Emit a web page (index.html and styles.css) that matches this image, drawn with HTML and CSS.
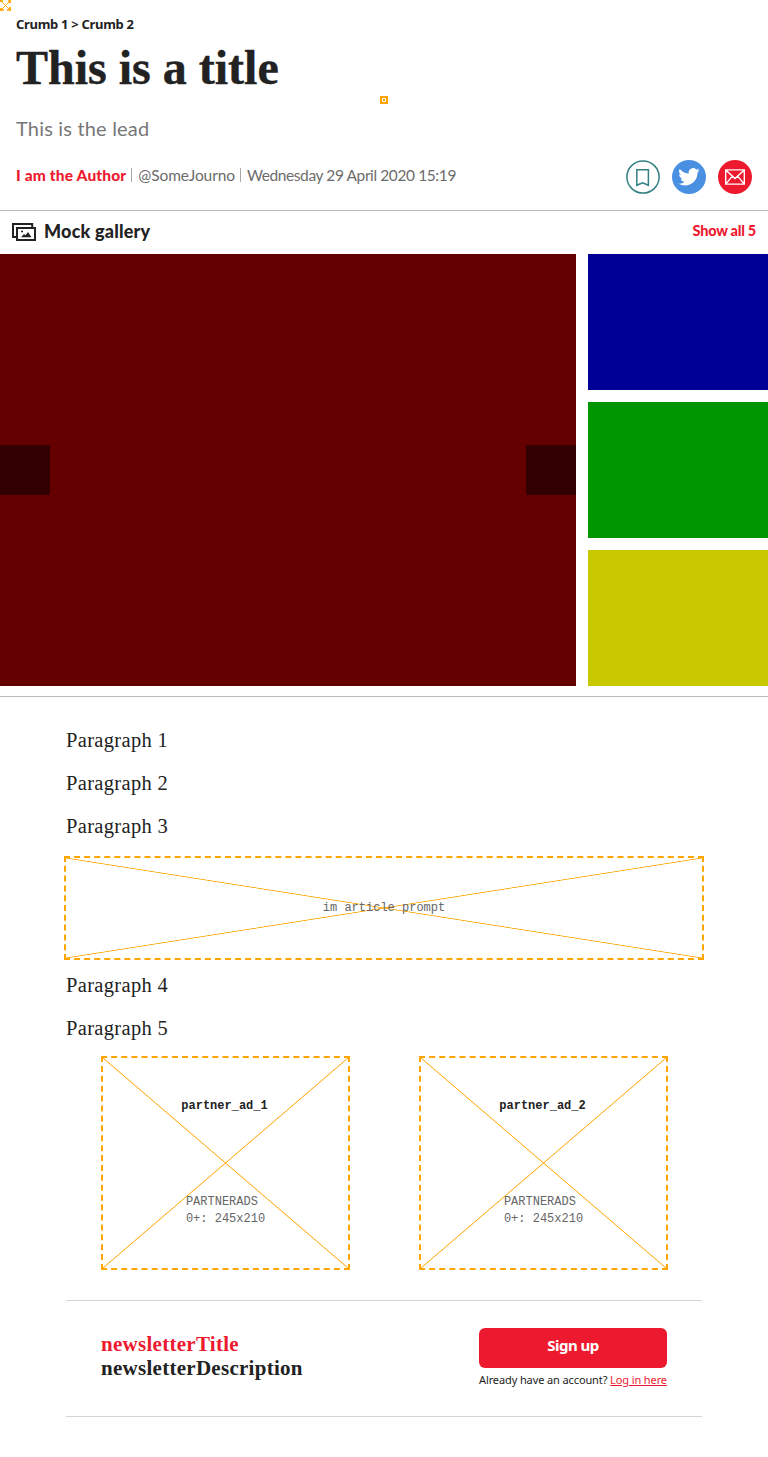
FILE: index.html
```html
<!DOCTYPE html>
<html lang="en">
<head>
<meta charset="utf-8">
<title>This is a title</title>
<link rel="stylesheet" href="styles.css">
</head>
<body>
<svg class="corner-marker" width="11" height="11" viewBox="0 0 11 11" fill="none" stroke="orange">
  <path d="M1 1l9 9M10 1l-9 9" stroke-width=".9"/>
  <path d="M0 1h3M8 1h3M0 10h4M7 10h4M1 0v2M10 0v3M1 8v3M10 7v4" stroke-width="1.7"/>
</svg>
<header class="header">
  <nav class="crumbs"><span>Crumb 1 &gt; Crumb 2</span></nav>
  <h1 class="title"><span>This is a title</span></h1>
  <div class="marker"></div>
  <p class="lead"><span>This is the lead</span></p>
  <div class="meta">
    <div class="byline"><b class="author">I am the Author</b><i class="bar"></i><span class="handle">@SomeJourno</span><i class="bar"></i><span class="date">Wednesday 29 April 2020 15:19</span></div>
    <div class="actions">
      <svg width="34" height="34" viewBox="0 0 34 34" fill="none" stroke="#338084" stroke-width="1.5"><circle cx="17" cy="17" r="16.1"/><path d="M10.8 9.8h11.6v15.5l-5.8-2.5-5.8 2.5z"/></svg>
      <svg width="34" height="34" viewBox="0 0 34 34"><circle cx="17" cy="17" r="17" fill="#4a90e2"/><path transform="translate(6.3 6.2) scale(.89)" fill="#fff" d="M23.95 4.57a10 10 0 0 1-2.82.77 4.96 4.96 0 0 0 2.16-2.72c-.95.55-2 .95-3.13 1.18a4.92 4.92 0 0 0-8.38 4.48C7.69 8.09 4.07 6.13 1.64 3.16a4.92 4.92 0 0 0 1.52 6.57 4.9 4.9 0 0 1-2.23-.61v.06a4.92 4.92 0 0 0 3.95 4.83 5 5 0 0 1-2.21.08 4.94 4.94 0 0 0 4.6 3.42A9.87 9.87 0 0 1 0 19.54a14 14 0 0 0 7.55 2.21c9.05 0 14-7.5 14-13.98 0-.21 0-.42-.02-.63a9.94 9.94 0 0 0 2.42-2.57z"/></svg>
      <svg width="34" height="34" viewBox="0 0 34 34" fill="none" stroke="#fff" stroke-width="1.4"><circle cx="17" cy="17" r="17" fill="#ed1a2f" stroke="none"/><path d="M7.7 9.9h18.6v14.2H7.7zM7.7 9.9L17 18.6l9.3-8.7M7.7 24.1l6.6-8M26.3 24.1l-6.6-8"/></svg>
    </div>
  </div>
</header>
<section class="gallery">
  <div class="gallery-head">
    <svg class="gallery-icon" width="24" height="18" viewBox="0 0 24 18" fill="none" stroke="#222" stroke-width="2"><path d="M20.2 4V1H1v13h4M5 5h18v12H5z"/><path d="M9 14.2l3-3.2 1.5 1.2L16 9l3.5 5.2z" fill="#222" stroke="none"/><path d="M9 8.5h2" stroke-width="1.6"/></svg>
    <h2 class="gallery-title"><span>Mock gallery</span></h2>
    <a class="show-all">Show all 5</a>
  </div>
  <div class="gallery-body">
    <div class="slide"><div class="arrow"></div><div class="arrow"></div></div>
    <div class="thumbs"><div class="thumb blue"></div><div class="thumb green"></div><div class="thumb yellow"></div></div>
  </div>
</section>
<main class="article">
  <p class="para"><span>Paragraph 1</span></p>
  <p class="para"><span>Paragraph 2</span></p>
  <p class="para"><span>Paragraph 3</span></p>
  <div class="box prompt"><span>im article prompt</span></div>
  <p class="para"><span>Paragraph 4</span></p>
  <p class="para last"><span>Paragraph 5</span></p>
  <div class="ads">
    <div class="box ad"><b>partner_ad_1</b><div class="sizes">PARTNERADS<br>0+: 245x210</div></div>
    <div class="box ad"><b>partner_ad_2</b><div class="sizes">PARTNERADS<br>0+: 245x210</div></div>
  </div>
  <section class="newsletter">
    <div class="news-text"><div class="news-title"><span>newsletterTitle</span></div><div class="news-desc"><span>newsletterDescription</span></div></div>
    <div class="news-action">
      <button class="signup"><span>Sign up</span></button>
      <p class="login">Already have an account? <a>Log in here</a></p>
    </div>
  </section>
</main>
</body>
</html>
```

FILE: styles.css
```css
* { box-sizing: border-box; }
body { margin: 0; background: #fff; color: #222; font-family: Lato, sans-serif; min-height: 1457px; }
h1, h2, p { margin: 0; }
svg { display: block; flex: none; }
.corner-marker { position: absolute; left: 0; top: 0; }
.header { padding: 15px 16px 16px; border-bottom: 1px solid #bbb; height: 211px; }
.crumbs { font: 700 13px/18px "Noto Sans", sans-serif; letter-spacing: -.3px; }
.title { margin-top: 8px; height: 55px; font: 700 48px/53px "Liberation Serif", serif; white-space: nowrap; -webkit-text-stroke: .4px #222; }
.marker { width: 8px; height: 8px; margin: 0 auto; background: radial-gradient(circle, orange 0 .8px, #fff 1px 2px, orange 2.3px); }
.lead { margin-top: 12px; font: 400 20px/24px Lato, sans-serif; letter-spacing: .18px; color: #777; }
.meta { margin-top: 20px; display: flex; justify-content: space-between; height: 34px; }
.byline { display: flex; align-items: center; height: 30px; font: 400 15.5px/20px Lato, sans-serif; color: #6c6c6c; white-space: nowrap; }
.author { font: 900 15.5px/20px Lato, sans-serif; letter-spacing: .15px; color: #ed1a2f; }
.handle { letter-spacing: -.1px; }
.date { letter-spacing: -.4px; }
.bar { width: 1px; height: 14px; margin: 0 6px 0 5px; background: #aaa; }
.actions { display: flex; gap: 12px; }
.gallery { border-bottom: 1px solid #bbb; padding-bottom: 10px; }
.gallery-head { height: 43px; padding: 0 12px 2px; display: flex; align-items: center; }
.gallery-title { margin: 0 0 2px 8px; font: 900 18px/24px Lato, sans-serif; letter-spacing: .2px; }
.show-all { margin: 0 0 2px auto; font: 900 14.5px/20px Lato, sans-serif; letter-spacing: -.25px; color: #ed1a2f; }
.gallery-body { display: flex; gap: 12px; height: 432px; }
.slide { width: 576px; background: #640000; display: flex; justify-content: space-between; align-items: flex-start; padding-top: 191px; }
.arrow { width: 50px; height: 50px; background: #320000; }
.thumbs { width: 180px; display: flex; flex-direction: column; gap: 12px; }
.thumb { flex: 1; }
.blue { background: #000096; }
.green { background: #009600; }
.yellow { background: #c8c800; }
.article { padding: 30px 66px 0; }
.para { font: 20.5px/27px "Liberation Serif", serif; letter-spacing: .33px; margin-bottom: 16px; }
.para.last { margin-bottom: 14px; }
.box {
  border: 2px dashed orange;
  background:
    linear-gradient(to top right, transparent calc(50% - .8px), orange, transparent calc(50% + .8px)),
    linear-gradient(to bottom right, transparent calc(50% - .8px), orange, transparent calc(50% + .8px));
  background-origin: padding-box; background-clip: padding-box;
  font: 12px/17px "Courier New", "Liberation Mono", monospace;
}
.prompt { height: 104px; margin: 0 -2px 12px; display: flex; align-items: center; justify-content: center; color: #666; }
.ads { display: flex; justify-content: space-between; padding: 0 34px 0 35px; }
.ad { width: 249px; height: 214px; display: flex; flex-direction: column; align-items: center; padding-top: 40px; }
.ad b { margin-right: 2px; }
.sizes { margin-top: 79px; color: #666; }
.newsletter { margin-top: 30px; height: 117px; border-top: 1px solid #d4d4d4; border-bottom: 1px solid #d4d4d4; display: flex; justify-content: space-between; padding: 27px 35px 0; }
.news-text { font: 700 21px/24px "Liberation Serif", serif; letter-spacing: .28px; padding-top: 4px; }
.news-title { color: #ed1a2f; }
.news-action { width: 188px; }
.signup { display: block; width: 188px; height: 40px; padding: 0 0 6px; border: 0; border-radius: 6px; background: #ed1a2f; color: #fff; font: 700 15px/20px "Noto Sans", sans-serif; letter-spacing: -.5px; }
.login { margin-top: 4px; font: 11px/16px "Noto Sans", sans-serif; letter-spacing: -.11px; white-space: nowrap; }
.login a { color: #ed1a2f; text-decoration: underline; }
```
